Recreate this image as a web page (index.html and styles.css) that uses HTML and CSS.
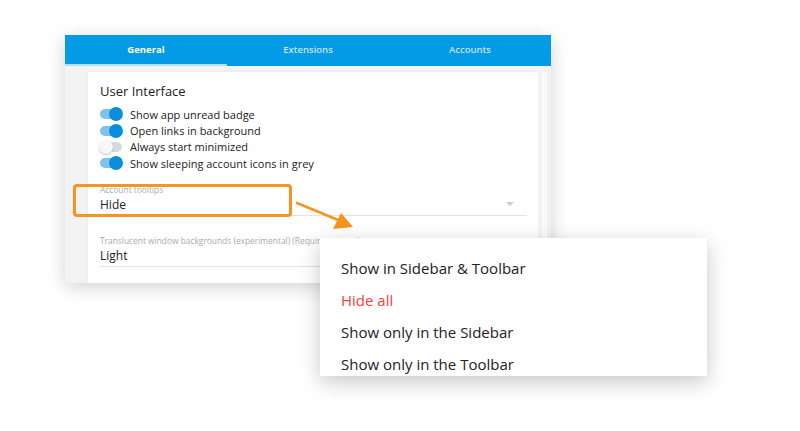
FILE: index.html
```html
<!DOCTYPE html>
<html>
<head>
<meta charset="utf-8">
<title>Settings</title>
<link rel="stylesheet" href="styles.css">
</head>
<body>

<div class="stage">
  <div class="window">
    <div class="tabs">
      <div class="tab active">General</div>
      <div class="tab">Extensions</div>
      <div class="tab">Accounts</div>
    </div>
    <div class="body">
      <div class="card">
        <div class="heading">User Interface</div>
        <div class="toggles">
          <div class="row"><span class="switch on"></span>Show app unread badge</div>
          <div class="row"><span class="switch on"></span>Open links in background</div>
          <div class="row"><span class="switch"></span>Always start minimized</div>
          <div class="row"><span class="switch on"></span>Show sleeping account icons in grey</div>
        </div>
        <div class="field">
          <div class="label">Account tooltips</div>
          <div class="value">Hide<span class="caret"></span></div>
        </div>
        <div class="field">
          <div class="label">Translucent window backgrounds (experimental) (Requires restart)</div>
          <div class="value">Light</div>
        </div>
      </div>
      <div class="scroll"></div>
    </div>
  </div>

  <div class="highlight"></div>

  <svg class="arrow" width="70" height="40" viewBox="0 0 70 40">
    <line x1="2" y1="3" x2="48" y2="22" stroke="#f7931e" stroke-width="2.5" stroke-linecap="round"/>
    <polygon points="58,27 38,29 46,13" fill="#f7931e"/>
  </svg>

  <div class="menu">
    <div class="item">Show in Sidebar &amp; Toolbar</div>
    <div class="item red">Hide all</div>
    <div class="item">Show only in the Sidebar</div>
    <div class="item">Show only in the Toolbar</div>
  </div>
</div>

</body>
</html>
```

FILE: styles.css
```css
body, html{
  margin:0;
  padding:0;
  background:#fff;
  font-family:"Open Sans", "Liberation Sans", sans-serif;
  color:#222;
}
.stage{
  position:relative;
  width:800px;
  height:431px;
  overflow:hidden;
  padding:35px 0 0 65px;
  box-sizing:border-box;
}
.window{
  width:486px;
  height:248px;
  background:#f3f3f3;
  box-shadow:0 4px 18px rgba(0,0,0,0.18);
  display:flex;
  flex-direction:column;
  overflow:hidden;
}
.tabs{
  display:flex;
  height:31px;
  background:#039be5;
  flex:none;
}
.tab{
  flex:1;
  display:flex;
  align-items:center;
  justify-content:center;
  font-size:9.5px;
  font-weight:600;
  color:rgba(255,255,255,0.75);
  border-bottom:2px solid transparent;
}
.tab.active{
  color:#fff;
  font-weight:700;
  border-bottom-color:#b3e0f7;
}
.body{
  flex:1;
  display:flex;
  padding:6px 0 0 23px;
  min-height:0;
}
.card{
  flex:1;
  background:#fff;
  padding:11px 11px 0 12px;
  box-shadow:0 0 2px rgba(0,0,0,0.08);
}
.scroll{
  width:13px;
  background:linear-gradient(to right,#f3f3f3 0,#f3f3f3 4px,#fafafa 4px,#fafafa 9px,#f1f1f1 9px);
}
.heading{
  font-size:13px;
  color:#222;
  line-height:16px;
}
.toggles{
  margin-top:7px;
}
.row{
  display:flex;
  align-items:center;
  height:16.4px;
  font-size:11px;
  color:#222;
}
.switch{
  position:relative;
  width:22px;
  height:10px;
  border-radius:5px;
  background:#d6dade;
  margin-right:8px;
  flex:none;
}
.switch::after{
  content:"";
  position:absolute;
  top:-2px;
  left:-1px;
  width:14px;
  height:14px;
  border-radius:50%;
  background:#f7f7f7;
  box-shadow:0 1px 2px rgba(0,0,0,0.25);
}
.switch.on{
  background:#7dc3ee;
}
.switch.on::after{
  left:9px;
  background:#0a8ddb;
  box-shadow:none;
}
.field{
  margin-top:13px;
  border-bottom:1px solid #e2e2e2;
  width:427px;
}
.field + .field{
  margin-top:20px;
}
.label{
  font-size:8.4px;
  color:#aaa;
  line-height:10px;
  white-space:nowrap;
}
.value{
  position:relative;
  font-size:12px;
  line-height:20px;
  color:#222;
}
.caret{
  position:absolute;
  right:13px;
  top:7px;
  border-left:4px solid transparent;
  border-right:4px solid transparent;
  border-top:4px solid #ccc;
}
.highlight{
  position:absolute;
  left:73px;
  top:184px;
  width:213px;
  height:27px;
  border:3px solid #f7931e;
  border-radius:4px;
}
.arrow{
  position:absolute;
  left:295px;
  top:200px;
}
.menu{
  position:absolute;
  left:320px;
  top:238px;
  width:387px;
  height:138px;
  background:#fff;
  box-shadow:0 6px 20px rgba(0,0,0,0.22);
  padding-top:14px;
  box-sizing:border-box;
  overflow:hidden;
}
.item{
  height:32px;
  line-height:32px;
  padding-left:21px;
  font-size:15px;
  color:#222;
}
.item.red{
  color:#f44336;
}
```
